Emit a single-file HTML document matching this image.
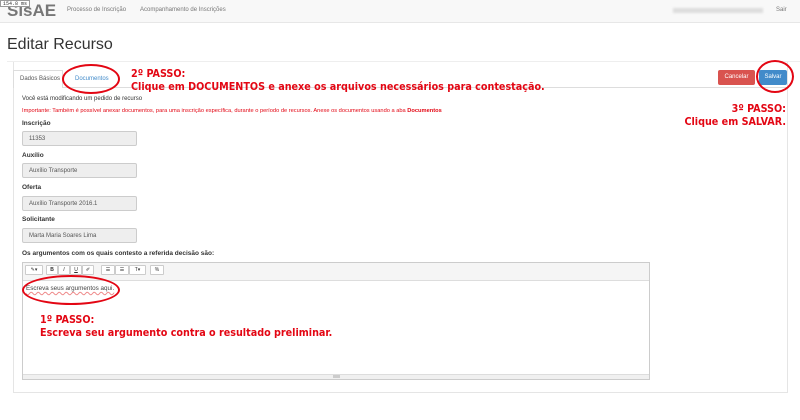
<!DOCTYPE html>
<html><head><meta charset="utf-8"><style>
*{box-sizing:border-box;margin:0;padding:0}
body{width:800px;height:420px;background:#fff;font-family:"Liberation Sans",sans-serif;position:relative;overflow:hidden;color:#333}
.a{position:absolute}
.nav{left:0;top:0;width:800px;height:23px;background:#f8f8f8;border-bottom:1px solid #e7e7e7}
.red{color:#e30613;font-family:"DejaVu Sans Condensed","Liberation Sans Narrow",sans-serif;font-weight:bold;font-size:10.7px;line-height:13px;white-space:nowrap}
.lbl{font-size:6.5px;font-weight:bold;color:#333}
.inp{left:22px;width:115px;height:15px;background:#eee;border:1px solid #ccc;border-radius:2px;font-size:6px;color:#555;padding:4px 6px}
.btn{height:10px;border:1px solid #ccc;border-radius:1px;background:#fff;top:265px;font-size:5px;text-align:center;line-height:8px;color:#333}
.ell{border:2px solid #e30613;border-radius:50%}
</style></head><body>
<div class="a nav"></div>
<div class="a" style="left:7px;top:1px;font-size:17px;color:#777;font-weight:bold">SisAE</div>
<div class="a" style="left:0;top:0;background:#fff;border:1px solid #999;font-family:'Liberation Mono',monospace;font-size:5px;padding:0 2px;height:7px;line-height:6px;width:30px">154.8 ms</div>
<div class="a" style="left:67px;top:7px;font-size:6px;color:#777">Processo de Inscrição</div>
<div class="a" style="left:140px;top:7px;font-size:6px;color:#777">Acompanhamento de Inscrições</div>
<div class="a" style="left:673px;top:8px;width:90px;height:5px;background:#ddd;filter:blur(1px)"></div>
<div class="a" style="left:776px;top:7px;font-size:6px;color:#777">Sair</div>
<div class="a" style="left:7px;top:36px;font-size:16px;color:#333">Editar Recurso</div>
<div class="a" style="left:7px;top:61px;width:793px;border-top:1px solid #eee"></div>
<div class="a" style="left:13px;top:62px;width:775px;height:331px;border:1px solid #e5e5e5;border-top:none"></div>
<div class="a" style="left:13px;top:70px;width:50px;height:18px;border:1px solid #ddd;border-bottom:none;background:#fff"></div>
<div class="a" style="left:63px;top:87px;width:725px;border-top:1px solid #ddd"></div>
<div class="a" style="left:20px;top:76px;font-size:6px;color:#555">Dados Básicos</div>
<div class="a" style="left:75px;top:76px;font-size:6px;color:#428bca">Documentos</div>
<div class="a ell" style="left:62px;top:64px;width:58px;height:30px"></div>
<div class="a red" style="left:131px;top:67px">2º PASSO:<br>Clique em DOCUMENTOS e anexe os arquivos necessários para contestação.</div>
<div class="a" style="left:718px;top:70px;width:37px;height:15px;background:#d9534f;border-radius:2px;color:#fff;font-size:6px;text-align:center;line-height:15px">Cancelar</div>
<div class="a" style="left:759px;top:70px;width:28px;height:15px;background:#428bca;border-radius:2px;color:#fff;font-size:6px;text-align:center;line-height:15px">Salvar</div>
<div class="a ell" style="left:756px;top:60px;width:38px;height:33px"></div>
<div class="a red" style="left:660px;top:102px;text-align:right;width:126px">3º PASSO:<br>Clique em SALVAR.</div>
<div class="a" style="left:22px;top:96px;font-size:6px;color:#333">Você está modificando um pedido de recurso</div>
<div class="a" style="left:22px;top:108px;font-size:5.7px;color:#e30613;white-space:nowrap">Importante: Também é possível anexar documentos, para uma inscrição específica, durante o período de recursos. Anexe os documentos usando a aba <b>Documentos</b></div>
<div class="a lbl" style="left:22px;top:120px">Inscrição</div>
<div class="a inp" style="top:131px">11353</div>
<div class="a lbl" style="left:22px;top:152px">Auxílio</div>
<div class="a inp" style="top:163px">Auxílio Transporte</div>
<div class="a lbl" style="left:22px;top:184px">Oferta</div>
<div class="a inp" style="top:196px">Auxílio Transporte 2016.1</div>
<div class="a lbl" style="left:22px;top:216px">Solicitante</div>
<div class="a inp" style="top:228px">Marta Maria Soares Lima</div>
<div class="a lbl" style="left:22px;top:250px">Os argumentos com os quais contesto a referida decisão são:</div>
<div class="a" style="left:22px;top:262px;width:628px;height:118px;border:1px solid #ccc"></div>
<div class="a" style="left:23px;top:263px;width:626px;height:18px;background:#f5f5f5;border-bottom:1px solid #ddd"></div>
<div class="a btn" style="left:25px;width:18px">✎▾</div>
<div class="a btn" style="left:46px;width:12px"><b>B</b></div>
<div class="a btn" style="left:58px;width:12px"><i>I</i></div>
<div class="a btn" style="left:70px;width:12px"><u>U</u></div>
<div class="a btn" style="left:82px;width:12px">✐</div>
<div class="a btn" style="left:101px;width:14px">☰</div>
<div class="a btn" style="left:115px;width:14px">☰</div>
<div class="a btn" style="left:129px;width:17px">T▾</div>
<div class="a btn" style="left:150px;width:14px">%</div>
<div class="a" style="left:26px;top:285px;font-size:6.3px;color:#444;text-decoration:underline wavy #e88;text-decoration-thickness:0.5px">Escreva seus argumentos aqui.</div>
<div class="a ell" style="left:22px;top:275px;width:98px;height:30px"></div>
<div class="a red" style="left:40px;top:313px">1º PASSO:<br>Escreva seu argumento contra o resultado preliminar.</div>
<div class="a" style="left:23px;top:374px;width:626px;height:5px;background:#f0f0f0;border-top:1px solid #ddd"></div>
<div class="a" style="left:333px;top:375px;width:7px;height:3px;background:#ccc"></div>
</body></html>
